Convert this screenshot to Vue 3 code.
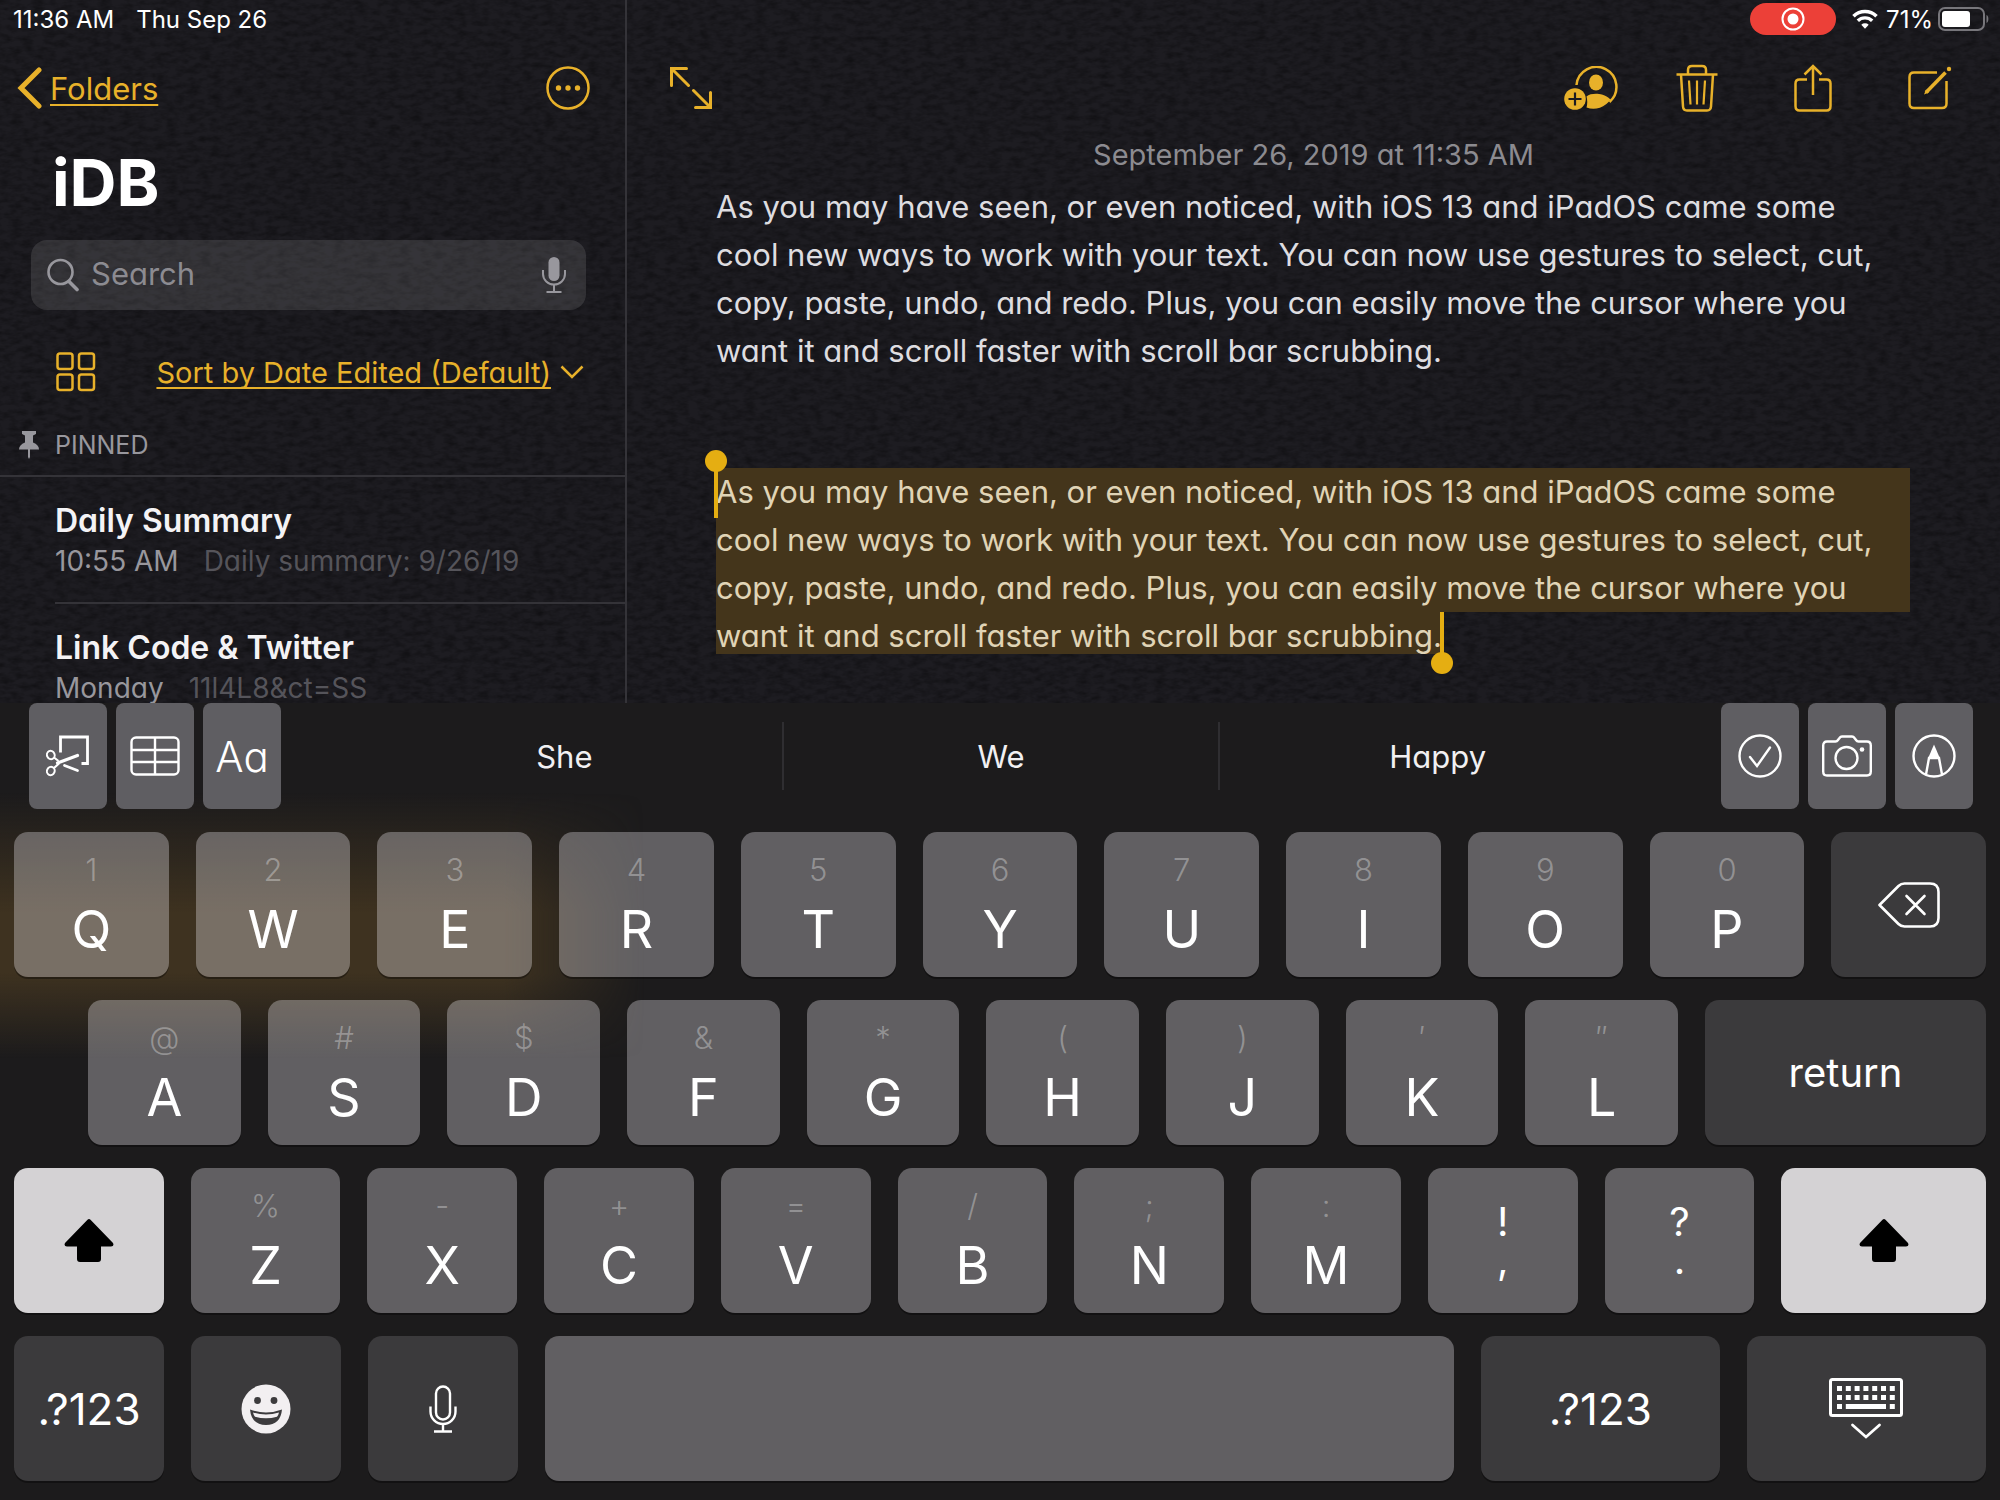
<template>
  <div class="app">
    <div class="notes">
      <svg class="paper" aria-hidden="true">
        <filter id="paper-grain" x="0" y="0" width="100%" height="100%">
          <feTurbulence type="fractalNoise" baseFrequency="0.09 0.19" numOctaves="3" seed="4" />
          <feColorMatrix
            type="matrix"
            values="0 0 0 0 0  0 0 0 0 0  0 0 0 0 0  1.2 0 0 0 -0.45"
          />
        </filter>
        <rect width="100%" height="100%" filter="url(#paper-grain)" />
      </svg>

      <header class="status">
        <span>11:36 AM</span>
        <span>Thu Sep 26</span>
        <div class="status-right">
          <span class="recording">
            <svg width="24" height="24" viewBox="0 0 24 24">
              <circle cx="12" cy="12" r="10.5" fill="none" stroke="#fff" stroke-width="2" />
              <circle cx="12" cy="12" r="5.5" fill="#fff" />
            </svg>
          </span>
          <svg class="wifi" width="26" height="20" viewBox="0 0 26 20" fill="none" stroke="#fff">
            <path d="M1.5 7.2a16.5 16.5 0 0 1 23 0" stroke-width="3.6" />
            <path d="M5.8 11.8a10.3 10.3 0 0 1 14.4 0" stroke-width="3.4" />
            <path d="M13 19.8l-3.7-4.1a5.4 5.4 0 0 1 7.4 0z" fill="#fff" stroke="none" />
          </svg>
          <span class="percent">71%</span>
          <svg width="52" height="24" viewBox="0 0 52 24">
            <rect x="1" y="1" width="45" height="22" rx="6" fill="none" stroke="#77767b" stroke-width="2" />
            <rect x="4" y="4" width="28" height="16" rx="3" fill="#fff" />
            <path d="M48.500 8c2.500 1 2.500 7 0 8z" fill="#77767b" />
          </svg>
        </div>
      </header>

      <div class="panes">
        <aside class="sidebar">
          <nav class="bar sidebar-bar">
            <a class="back" href="#" @click.prevent>
              <svg width="25" height="42" viewBox="0 0 25 42">
                <path d="M22 3L4 21l18 18" fill="none" stroke="currentColor" stroke-width="5" stroke-linecap="round" />
              </svg>
              <span>Folders</span>
            </a>
            <button class="icon-button" aria-label="More">
              <svg width="44" height="44" viewBox="0 0 44 44">
                <circle cx="22" cy="22" r="20.500" fill="none" stroke="currentColor" stroke-width="2.500" />
                <g fill="currentColor">
                  <circle cx="12.500" cy="22" r="2.700" />
                  <circle cx="22" cy="22" r="2.700" />
                  <circle cx="31.500" cy="22" r="2.700" />
                </g>
              </svg>
            </button>
          </nav>

          <h1>iDB</h1>

          <div class="search">
            <label for="search" aria-label="Search">
              <svg width="32" height="34" viewBox="0 0 32 34" fill="none" stroke="currentColor">
                <circle cx="13.500" cy="14" r="12" stroke-width="2.600" />
                <path d="M22 23.500l8 8" stroke-width="3.600" stroke-linecap="round" />
              </svg>
            </label>
            <input id="search" v-model="query" type="text" placeholder="Search" />
            <button aria-label="Dictate">
              <svg width="24" height="36" viewBox="0 0 24 36" fill="none" stroke="currentColor" stroke-width="2">
                <rect x="6.500" y="0" width="11" height="24" rx="5.500" fill="currentColor" stroke="none" />
                <path d="M1 13v4a11 10.500 0 0 0 22 0v-4M12 28v6M4.500 35h15" />
              </svg>
            </button>
          </div>

          <div class="sort">
            <button class="icon-button" aria-label="Gallery view">
              <svg width="40" height="40" viewBox="0 0 40 40" fill="none" stroke="currentColor" stroke-width="2.500">
                <rect x="1.500" y="1.500" width="15" height="15.500" rx="2.500" />
                <rect x="23" y="1.500" width="15" height="15.500" rx="2.500" />
                <rect x="1.500" y="22.500" width="15" height="15.500" rx="2.500" />
                <rect x="23" y="22.500" width="15" height="15.500" rx="2.500" />
              </svg>
            </button>
            <button class="sort-by">
              <span>Sort by Date Edited (Default)</span>
              <svg width="24" height="14" viewBox="0 0 24 14">
                <path d="M1.500 1.500L12 12 22.500 1.500" fill="none" stroke="currentColor" stroke-width="2.500" />
              </svg>
            </button>
          </div>

          <h2>
            <svg width="20" height="28" viewBox="0 0 20 28" fill="currentColor">
              <path d="M3 0h14v3l-3 1.500v7c4 1.500 6 4 6 7H0c0-3 2-5.500 6-7v-7L3 3z" />
              <path d="M9 18h2v8l-1 2-1-2z" />
            </svg>
            PINNED
          </h2>

          <ul class="note-list">
            <li v-for="note in notes" :key="note.title">
              <h3>{{ note.title }}</h3>
              <p>
                <span>{{ note.time }}</span>
                <span class="preview">{{ note.preview }}</span>
              </p>
            </li>
          </ul>
        </aside>

        <main class="editor">
          <div class="bar editor-bar">
            <button class="icon-button" aria-label="Full screen">
              <svg width="42" height="42" viewBox="0 0 42 42" fill="none" stroke="currentColor" stroke-width="3" stroke-linecap="round">
                <path d="M1.500 18.500v-17h15M1.500 1.500l17 17M25.500 40.500h15v-15M40.500 40.500l-17-17" />
              </svg>
            </button>
            <div class="people">
              <button class="icon-button" aria-label="Add people">
                <svg width="54" height="44" viewBox="0 0 54 44">
                  <path d="M12.500 19a20 20 0 1 1 33 17" fill="none" stroke="currentColor" stroke-width="2.500" />
                  <ellipse cx="32" cy="16.500" rx="7" ry="8" fill="currentColor" />
                  <path d="M22.500 30.500c2-2 6-2.700 9.500-2.700s9.500 1 14.500 5.700a20.500 20.500 0 0 1-24 8q1.500-5.500 0-11z" fill="currentColor" />
                  <circle cx="11" cy="33" r="10.800" fill="currentColor" />
                  <path d="M11 26.500v13M4.500 33h13" stroke="#1c1b20" stroke-width="2.200" />
                </svg>
              </button>
              <button class="icon-button" aria-label="Delete">
                <svg width="42" height="48" viewBox="0 0 42 48" fill="none" stroke="currentColor" stroke-width="2.500">
                  <path d="M0.500 10.500h41M5 10.500l2 32q.3 4 4 4h20q3.700 0 4-4l2-32M12 10V6q0-4 4-4h10q4 0 4 4v4" />
                  <path d="M13 16.500l1.500 24M21 16.500v24M29 16.500l-1.500 24" stroke-width="2.200" />
                </svg>
              </button>
            </div>
            <button class="icon-button" aria-label="Share">
              <svg width="38" height="48" viewBox="0 0 38 48" fill="none" stroke="currentColor" stroke-width="2.500">
                <path d="M13 15.500H5.500q-4 0-4 4V42q0 4.500 4 4.500h27q4 0 4-4.500V19.500q0-4-4-4H25" />
                <path d="M19 31V2M10.500 10.500L19 2l8.500 8.500" />
              </svg>
            </button>
            <button class="icon-button" aria-label="New note">
              <svg width="44" height="44" viewBox="0 0 44 44" fill="none" stroke="currentColor" stroke-width="2.500">
                <path d="M29 6.500H6q-4.500 0-4.500 4.500v26.500Q1.500 42 6 42h28q4.500 0 4.500-4.500V15" />
                <path d="M18 26.500L37.500 6.500" stroke-width="3.600" />
                <path d="M16 28.500l2-5 3 3z" fill="currentColor" stroke="none" />
                <circle cx="41" cy="3" r="2.200" fill="currentColor" stroke="none" />
              </svg>
            </button>
          </div>

          <time class="date">September 26, 2019 at 11:35 AM</time>

          <p class="text">
            <span v-for="line in lines" :key="line">{{ line }}</span>
          </p>
          <p class="text selected">
            <span v-for="line in lines" :key="line">{{ line }}</span>
          </p>
        </main>
      </div>
    </div>

    <section class="keyboard">
      <div class="shortcuts">
        <button class="tool" aria-label="Cut">
          <svg width="44" height="42" viewBox="0 0 44 42" fill="none" stroke="#fff">
            <path d="M14.500 17.500V2h27v26.500H35.500" stroke-width="2.800" />
            <ellipse cx="4.800" cy="20" rx="3.800" ry="4.200" stroke-width="2" transform="rotate(-25 4.800 20)" />
            <ellipse cx="4.800" cy="36" rx="3.800" ry="4.200" stroke-width="2" transform="rotate(25 4.800 36)" />
            <path d="M8 22.500l4.500 3.500M8 33l5-4.500" stroke-width="2.200" />
            <path d="M11.500 28L31.500 20.500" stroke-width="3.200" stroke-linecap="round" />
            <path d="M18.500 30.500l13 5" stroke-width="2.800" stroke-linecap="round" />
          </svg>
        </button>
        <button class="tool" aria-label="Table">
          <svg width="50" height="40" viewBox="0 0 50 40" fill="none" stroke="#fff" stroke-width="2.400">
            <rect x="1.500" y="1.500" width="47" height="37" rx="4.500" />
            <path d="M25 1.500v37M1.500 14h47M1.500 26h47" />
          </svg>
        </button>
        <button class="tool aa">Aa</button>

        <div class="suggestions">
          <button v-for="word in suggestions" :key="word">{{ word }}</button>
        </div>

        <button class="tool" aria-label="Checklist">
          <svg width="44" height="44" viewBox="0 0 44 44" fill="none" stroke="#fff" stroke-width="2.400">
            <circle cx="22" cy="22" r="20.500" />
            <path d="M12 23l7 9 13-18.500" stroke-linecap="round" />
          </svg>
        </button>
        <button class="tool" aria-label="Camera">
          <svg width="50" height="42" viewBox="0 0 50 42" fill="none" stroke="#fff" stroke-width="2.400">
            <path d="M5 6.500h8.500q1.500 0 2.500-1.500l1.500-2q1-1.500 2.500-1.500h10q1.500 0 2.500 1.500L34 5q1 1.500 2.500 1.500H45q3.800 0 3.800 4v26q0 4-3.800 4H5q-3.800 0-3.800-4v-26q0-4 3.800-4z" />
            <circle cx="24.500" cy="23" r="11" />
            <circle cx="40" cy="14.500" r="2.300" fill="#fff" stroke="none" />
          </svg>
        </button>
        <button class="tool" aria-label="Markup">
          <svg width="44" height="44" viewBox="0 0 44 44" fill="none" stroke="#fff" stroke-width="2.400">
            <circle cx="22" cy="22" r="20.500" />
            <path d="M22 10.500l-6 14h12z" fill="#fff" stroke="none" />
            <path d="M14 40.500l3-16.500h10l3 16.500" />
          </svg>
        </button>
      </div>

      <div class="row">
        <button v-for="key in topRow" :key="key[1]" class="key">
          <small>{{ key[0] }}</small>{{ key[1] }}
        </button>
        <button class="key dark" aria-label="Delete">
          <svg width="62" height="46" viewBox="0 0 62 46" fill="none" stroke="#fff" stroke-width="2.600" stroke-linejoin="round">
            <path d="M1.500 23L20.500 4q2.500-2.500 6-2.500H52q8.500 0 8.500 8.500v26q0 8.500-8.500 8.500H26.500q-3.500 0-6-2.500z" />
            <path d="M28.500 14l18 18M46.500 14l-18 18" stroke-linecap="round" />
          </svg>
        </button>
      </div>

      <div class="row home-row">
        <button v-for="key in homeRow" :key="key[1]" class="key">
          <small>{{ key[0] }}</small>{{ key[1] }}
        </button>
        <button class="key dark return">return</button>
      </div>

      <div class="row">
        <button class="key shift" aria-label="Shift">
          <svg width="50" height="43" viewBox="0 0 50 43">
            <path :d="shiftArrow" />
          </svg>
        </button>
        <button v-for="key in bottomRow" :key="key[1]" class="key">
          <small>{{ key[0] }}</small>{{ key[1] }}
        </button>
        <button class="key pair"><span>!</span><span>,</span></button>
        <button class="key pair"><span>?</span><span>.</span></button>
        <button class="key shift right-shift" aria-label="Shift">
          <svg width="50" height="43" viewBox="0 0 50 43">
            <path :d="shiftArrow" />
          </svg>
        </button>
      </div>

      <div class="row">
        <button class="key dark numbers">.?123</button>
        <button class="key dark" aria-label="Emoji">
          <svg width="50" height="50" viewBox="0 0 50 50">
            <circle cx="25" cy="25" r="24.500" fill="#f2eff1" />
            <circle cx="16.500" cy="16.500" r="3.400" fill="#3c3b3d" />
            <circle cx="33" cy="16.500" r="3.400" fill="#3c3b3d" />
            <path d="M9 25.500q16 6 32 0-1.500 15.500-16 15.500T9 25.500z" fill="#3c3b3d" />
            <path d="M12 28.500q13 4 26 0-.5 2.500-2 4.200-11 3-22 0-1.500-1.700-2-4.200z" fill="#f2eff1" />
          </svg>
        </button>
        <button class="key dark" aria-label="Dictate">
          <svg width="28" height="48" viewBox="0 0 28 48" fill="none" stroke="#fff" stroke-width="2.400">
            <rect x="7" y="1.500" width="14" height="33" rx="7" />
            <path d="M1.500 21.500v5a12.500 12.500 0 0 0 25 0v-5M14 39.500v7M5 46.500h18" />
          </svg>
        </button>
        <button class="key space" aria-label="Space"></button>
        <button class="key dark numbers wide">.?123</button>
        <button class="key dark wide" aria-label="Hide keyboard">
          <svg width="74" height="61" viewBox="0 0 74 61" fill="#fff">
            <rect x="1.500" y="1.500" width="71" height="36" rx="2" fill="none" stroke="#fff" stroke-width="3" />
            <template v-for="n in 7" :key="n">
              <rect :x="8 + (n - 1) * 8.8" y="8" width="5" height="5" />
              <rect :x="8 + (n - 1) * 8.8" y="17" width="5" height="5" />
            </template>
            <rect x="8" y="26" width="5" height="5" />
            <rect x="16.800" y="26" width="40.200" height="5" />
            <rect x="60.800" y="26" width="5" height="5" />
            <path d="M23.500 47L37 59l13.500-12" fill="none" stroke="#fff" stroke-width="2.800" stroke-linecap="round" />
          </svg>
        </button>
      </div>
    </section>
  </div>
</template>

<script setup>
import { ref } from "vue";

const query = ref("");

const notes = [
  { title: "Daily Summary", time: "10:55 AM", preview: "Daily summary: 9/26/19" },
  { title: "Link Code & Twitter", time: "Monday", preview: "11l4L8&ct=SS" },
];

const lines = [
  "As you may have seen, or even noticed, with iOS 13 and iPadOS came some",
  "cool new ways to work with your text. You can now use gestures to select, cut,",
  "copy, paste, undo, and redo. Plus, you can easily move the cursor where you",
  "want it and scroll faster with scroll bar scrubbing.",
];

const suggestions = ["She", "We", "Happy"];

// [hint, letter]
const pairUp = (hints, letters) => [...letters].map((l, i) => [hints[i], l]);

const topRow = pairUp("1234567890", "QWERTYUIOP");
const homeRow = pairUp("@#$&*()′″", "ASDFGHJKL");
const bottomRow = pairUp("%-+=/;:", "ZXCVBNM");

const shiftArrow =
  "M23.500 0.800q1.500-1.500 3 0L49 24q1.500 3.500-2 3.500H37V40q0 3-3 3H16q-3 0-3-3V27.500H3Q-.5 27.500 1 24z";
</script>

<style>
body {
  margin: 0;
  background: #1c1b1c;
}
</style>

<style scoped>
.app {
  display: flex;
  flex-direction: column;
  height: 100vh;
  overflow: hidden;
  font-family: Inter, "Liberation Sans", sans-serif;
  font-feature-settings: "cv11";
  color: #dedde0;
}

button {
  display: flex;
  align-items: center;
  justify-content: center;
  margin: 0;
  padding: 0;
  border: 0;
  background: none;
  color: inherit;
  font: inherit;
  font-feature-settings: inherit;
}

svg {
  display: block;
  flex: none;
}

.notes {
  position: relative;
  display: flex;
  flex: 1;
  flex-direction: column;
  min-height: 0;
  overflow: hidden;
  background: #1d1c21;
}

.paper {
  position: absolute;
  width: 100%;
  height: 100%;
  opacity: 0.6;
}

/* the status bar floats over both panes */
.status {
  position: absolute;
  top: 0;
  right: 0;
  left: 0;
  z-index: 1;
  display: flex;
  align-items: center;
  gap: 22px;
  height: 38px;
  padding: 0 10px 0 13px;
  color: #fff;
  font-size: 24px;
}

.status-right {
  display: flex;
  align-items: center;
  margin-left: auto;
}

.recording {
  display: flex;
  align-items: center;
  justify-content: center;
  width: 86px;
  height: 32px;
  border-radius: 16px;
  background: #ec4038;
}

.wifi {
  margin: 0 8px 0 16px;
}

.percent {
  margin-right: 5px;
}

.panes {
  position: relative;
  display: flex;
  flex: 1;
  min-height: 0;
}

.bar {
  display: flex;
  align-items: center;
  height: 100px;
  padding-top: 38px;
  color: #e8b12a;
}

.icon-button {
  color: #e8b12a;
}

.sidebar {
  flex: none;
  box-sizing: border-box;
  width: 627px;
  border-right: 2px solid #343338;
}

.sidebar-bar {
  justify-content: space-between;
  padding-right: 35px;
  padding-left: 17px;
}

.back {
  display: flex;
  align-items: center;
  gap: 8px;
  color: inherit;
  font-size: 31px;
  text-decoration: none;
}

.back span,
.sort-by span {
  text-decoration: underline;
  text-decoration-thickness: 2px;
  text-underline-offset: 4px;
  text-decoration-skip-ink: none;
}

h1 {
  margin: 10px 0 22px 52px;
  color: #fff;
  font-size: 65px;
  font-weight: 700;
  line-height: 70px;
}

.search {
  display: flex;
  align-items: center;
  height: 70px;
  margin: 0 39px 0 31px;
  padding: 0 20px 0 16px;
  border-radius: 16px;
  background: rgba(255, 255, 255, 0.11);
  color: #98979d;
}

.search input {
  flex: 1;
  min-width: 0;
  margin: 0 12px;
  padding: 0 0 4px;
  border: 0;
  outline: 0;
  background: none;
  color: #fff;
  font: inherit;
  font-feature-settings: inherit;
  font-size: 31px;
}

.search input::placeholder {
  color: #8c8b91;
  opacity: 1;
}

.sort {
  display: flex;
  align-items: center;
  justify-content: space-between;
  height: 60px;
  margin-top: 32px;
  padding: 0 41px 0 56px;
}

.sort-by {
  gap: 9px;
  color: #e8b12a;
  font-size: 29px;
}

h2 {
  display: flex;
  align-items: center;
  gap: 16px;
  height: 61px;
  margin: 0;
  padding: 12px 0 0 19px;
  border-bottom: 2px solid #343338;
  color: #98979d;
  font-size: 25px;
  font-weight: 400;
}

.note-list {
  margin: 0;
  padding: 0 0 0 55px;
  list-style: none;
}

.note-list li {
  padding: 24px 0 21px;
  border-bottom: 2px solid #343338;
  line-height: 40px;
}

h3 {
  margin: 0;
  color: #f4f3f5;
  font-size: 32px;
  font-weight: 600;
}

.note-list p {
  display: flex;
  gap: 25px;
  margin: 0;
  color: #98979d;
  font-size: 28px;
}

.note-list .preview {
  color: #55545a;
}

.editor {
  flex: 1;
  min-width: 0;
}

.editor-bar {
  gap: 76px;
  padding-right: 48px;
  padding-left: 43px;
}

.people {
  display: flex;
  align-items: center;
  gap: 58px;
  margin-left: auto;
}

.date {
  display: block;
  color: #8c8b90;
  font-size: 29px;
  line-height: 34px;
  text-align: center;
}

.text {
  margin: 11px 90px 0 89px;
  font-size: 31px;
  line-height: 48px;
  white-space: nowrap;
}

.text span {
  display: block;
}

.text.selected {
  margin-top: 93px;
  color: #e0d4b6;
}

.selected span {
  position: relative;
  background: #44351b;
}

.selected span:last-child {
  width: fit-content;
  height: 42px;
}

.selected span:first-child::before,
.selected span:last-child::before {
  content: "";
  position: absolute;
  top: 0;
  left: -2px;
  z-index: 1;
  width: 4px;
  height: 50px;
  background: #e5ae12;
}

.selected span:last-child::before {
  right: -2px;
  left: auto;
  height: 46px;
}

.selected span:first-child::after,
.selected span:last-child::after {
  content: "";
  position: absolute;
  top: -18px;
  left: -11px;
  width: 22px;
  height: 22px;
  border-radius: 50%;
  background: #e5ae12;
}

.selected span:last-child::after {
  top: 40px;
  right: -11px;
  left: auto;
}

.keyboard {
  position: relative;
  display: flex;
  flex: none;
  flex-direction: column;
  gap: 23px;
  padding-bottom: 19px;
  background: #1c1b1c;
}

/* amber light from the note bleeding through the keyboard */
.keyboard::before {
  content: "";
  position: absolute;
  top: 90px;
  left: 0;
  width: 700px;
  height: 265px;
  background: linear-gradient(transparent, #3e3220 45%, #3e3220 68%, transparent);
  mask-image: linear-gradient(90deg, #000 72%, transparent 92%);
}

.shortcuts {
  position: relative;
  display: flex;
  gap: 9px;
  height: 106px;
  padding: 0 27px 0 29px;
}

.tool {
  width: 78px;
  border-radius: 8px;
  background: #5f5e62;
}

.aa {
  color: #fff;
  font-size: 42px;
  font-weight: 300;
}

.suggestions {
  display: flex;
  flex: 1;
  align-items: center;
  margin: 0 57px;
}

.suggestions button {
  flex: 1;
  height: 68px;
  color: #f1f0f2;
  font-size: 31px;
}

.suggestions button + button {
  border-left: 2px solid #2f2e31;
}

.row {
  position: relative;
  display: flex;
  gap: 27px;
  height: 145px;
  padding: 0 14px;
}

.home-row {
  padding-left: 88px;
}

.key {
  flex: 150 0 0;
  flex-direction: column;
  min-width: 0;
  border-radius: 14px;
  background: rgba(253, 250, 255, 0.31);
  box-shadow: 0 2px 0 rgba(0, 0, 0, 0.35);
  color: #fff;
  font-size: 52px;
  line-height: 60px;
}

.key small {
  margin-bottom: 10px;
  color: rgba(255, 255, 255, 0.32);
  font-size: 31px;
  font-weight: 300;
  line-height: 40px;
}

.key.dark {
  background: rgba(250, 245, 255, 0.14);
}

.key.return {
  flex-grow: 276;
  font-size: 40px;
}

.key.numbers {
  font-size: 44px;
}

.key.pair {
  font-size: 40px;
  line-height: 38px;
}

.key.shift {
  background: #d4d2d4;
}

.key.right-shift {
  flex-grow: 205;
}

.key.space {
  flex-grow: 908;
}

.key.wide {
  flex-grow: 239;
}
</style>
